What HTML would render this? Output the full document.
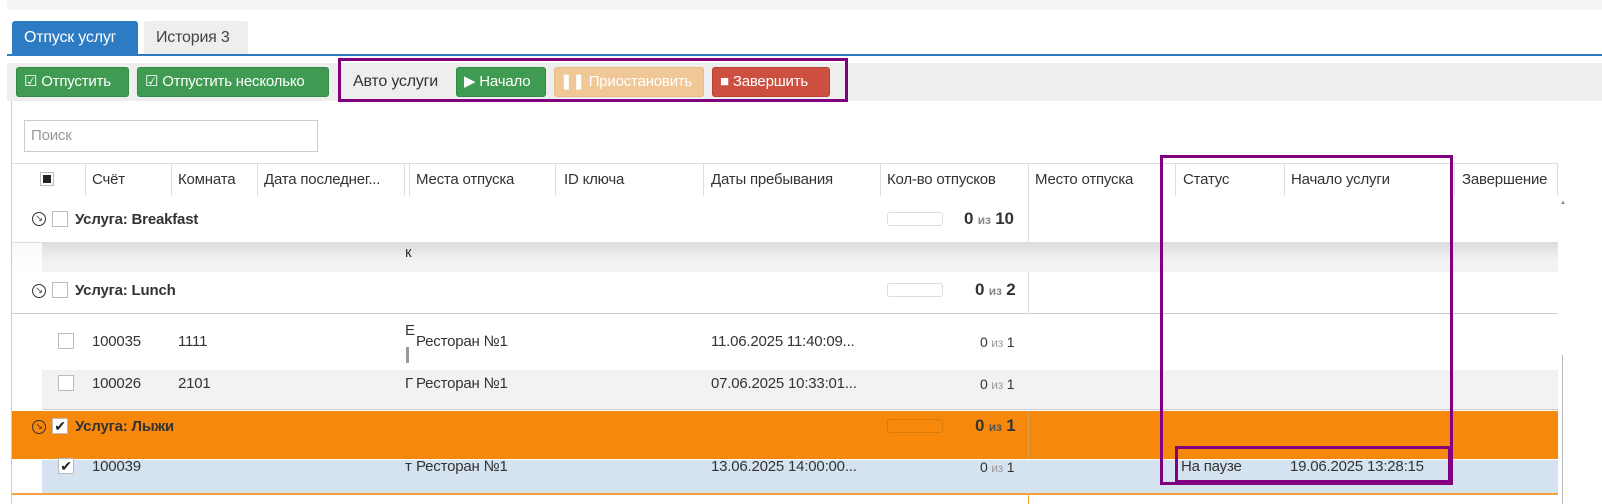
<!DOCTYPE html>
<html><head><meta charset="utf-8"><style>
*{box-sizing:border-box;margin:0;padding:0}
body{width:1602px;height:504px;background:#fff;font-family:"Liberation Sans Narrow","Liberation Sans",sans-serif;font-size:15px;letter-spacing:-0.2px;color:#333;position:relative;overflow:hidden}
.a{position:absolute}
.btn{position:absolute;top:67px;height:30px;border-radius:3px;color:#fff;line-height:28px;padding-left:7px;font-size:15px;white-space:nowrap;overflow:hidden}
.g{background:#3f9a52;border:1px solid #358a45}
.cb{position:absolute;width:16px;height:16px;border:1px solid #bbb;background:#fff}
.hd{position:absolute;top:171px;font-size:15px;color:#333}
.sep{position:absolute;top:163px;height:33px;width:1px;background:#ddd}
.t{position:absolute;font-size:15px;color:#333;white-space:nowrap}
.b{font-weight:bold}
.bar{position:absolute;width:56px;height:14px;border:1px solid #ddd;border-radius:3px;background:#fff}
.circ{position:absolute;width:14px;height:14px;border:1.5px solid #333;border-radius:50%;font-size:9px;line-height:11px;text-align:center}
</style></head><body>
<div class="a" style="left:7px;top:0;width:1595px;height:10px;background:#f5f5f5"></div>
<div class="a" style="left:12px;top:21px;width:126px;height:34px;background:#2c7bc3;border-radius:3px 3px 0 0;color:#fff;line-height:34px;padding-left:12px;font-size:16px">Отпуск услуг</div>
<div class="a" style="left:144px;top:21px;width:104px;height:34px;background:#eee;border-radius:3px 3px 0 0;line-height:34px;padding-left:12px;font-size:16px;color:#444">История 3</div>
<div class="a" style="left:7px;top:54px;width:1595px;height:2px;background:#2c7bc3"></div>
<div class="a" style="left:7px;top:63px;width:1595px;height:38px;background:#eee"></div>
<div class="btn g" style="left:16px;width:113px">☑ Отпустить</div>
<div class="btn g" style="left:137px;width:192px">☑ Отпустить несколько</div>
<div class="a" style="left:338px;top:58px;width:510px;height:44px;border:3px solid #800080"></div>
<div class="t" style="left:353px;top:73px;font-size:16px">Авто услуги</div>
<div class="btn g" style="left:456px;width:90px">▶ Начало</div>
<div class="btn" style="left:554px;width:150px;background:#f0c797;border:1px solid #e8bb85;padding-left:5px">❚❚ Приостановить</div>
<div class="btn" style="left:712px;width:118px;background:#cd4f3f;border:1px solid #bb4333">■ Завершить</div>
<div class="a" style="left:11px;top:101px;width:1px;height:403px;background:#ccc"></div>
<div class="a" style="left:24px;top:120px;width:294px;height:32px;border:1px solid #ccc;color:#999;padding:6px 6px">Поиск</div>
<div class="a" style="left:12px;top:163px;width:1546px;height:1px;background:#ddd"></div>
<div class="a" style="left:40px;top:172px;width:14px;height:14px;border:1px solid #bbb;background:#fff"><div style="margin:2px;width:8px;height:8px;background:#222"></div></div>
<div class="sep" style="left:85px"></div><div class="sep" style="left:171px"></div><div class="sep" style="left:257px"></div><div class="sep" style="left:404px"></div><div class="sep" style="left:409px"></div><div class="sep" style="left:555px"></div><div class="sep" style="left:703px"></div><div class="sep" style="left:880px"></div><div class="sep" style="left:1028px"></div><div class="sep" style="left:1175px"></div><div class="sep" style="left:1284px"></div><div class="sep" style="left:1454px"></div><div class="sep" style="left:1557px"></div>
<div class="hd" style="left:92px">Счёт</div><div class="hd" style="left:178px">Комната</div><div class="hd" style="left:264px">Дата последнег...</div><div class="hd" style="left:416px">Места отпуска</div><div class="hd" style="left:564px">ID ключа</div><div class="hd" style="left:711px">Даты пребывания</div><div class="hd" style="left:887px">Кол-во отпусков</div><div class="hd" style="left:1035px">Место отпуска</div><div class="hd" style="left:1183px">Статус</div><div class="hd" style="left:1291px">Начало услуги</div><div class="hd" style="left:1462px">Завершение</div>
<!-- Breakfast -->
<div class="a" style="left:12px;top:196px;width:1546px;height:47px;background:#fff;border-bottom:1px solid #ddd"></div>
<div class="circ" style="left:32px;top:212px">↘</div><div class="cb" style="left:52px;top:211px"></div>
<div class="t b" style="left:75px;top:211px">Услуга: Breakfast</div>
<div class="bar" style="left:887px;top:212px"></div><div class="t b" style="left:964px;top:209px;font-size:17px">0 <small style="font-size:12px;color:#888">из</small> 10</div>
<div class="a" style="left:1028px;top:196px;width:1px;height:47px;background:#ddd"></div>
<div class="a" style="left:12px;top:243px;width:1546px;height:29px;background:linear-gradient(#ddd,#f2f2f2 60%)"></div>
<div class="a" style="left:12px;top:243px;width:30px;height:29px;background:linear-gradient(#fafafa,#fff)"></div>
<div class="t" style="left:405px;top:244px">к</div>
<!-- Lunch -->
<div class="a" style="left:12px;top:272px;width:1546px;height:42px;background:#fff;border-bottom:1px solid #ccc"></div>
<div class="circ" style="left:32px;top:284px">↘</div><div class="cb" style="left:52px;top:282px"></div>
<div class="t b" style="left:75px;top:282px">Услуга: Lunch</div>
<div class="bar" style="left:887px;top:283px"></div><div class="t b" style="left:975px;top:280px;font-size:17px">0 <small style="font-size:12px;color:#888">из</small> 2</div>
<div class="a" style="left:1028px;top:272px;width:1px;height:42px;background:#ddd"></div>
<!-- 100035 -->
<div class="cb" style="left:58px;top:333px"></div>
<div class="t" style="left:92px;top:333px">100035</div><div class="t" style="left:178px;top:333px">1111</div>
<div class="t" style="left:405px;top:322px">E</div><div class="a" style="left:406px;top:347px;width:3px;height:16px;background:#999"></div>
<div class="t" style="left:416px;top:333px">Ресторан №1</div><div class="t" style="left:711px;top:333px">11.06.2025 11:40:09...</div>
<div class="t" style="left:980px;top:334px;font-size:14px">0 <span style="font-size:12px;color:#999">из</span> 1</div>
<!-- 100026 -->
<div class="a" style="left:42px;top:370px;width:1516px;height:40px;background:#f2f2f2;border-bottom:1px solid #ccc"></div>
<div class="cb" style="left:58px;top:375px"></div>
<div class="t" style="left:92px;top:375px">100026</div><div class="t" style="left:178px;top:375px">2101</div><div class="t" style="left:405px;top:375px">Г</div>
<div class="t" style="left:416px;top:375px">Ресторан №1</div><div class="t" style="left:711px;top:375px">07.06.2025 10:33:01...</div>
<div class="t" style="left:980px;top:376px;font-size:14px">0 <span style="font-size:12px;color:#999">из</span> 1</div>
<!-- Лыжи -->
<div class="a" style="left:12px;top:411px;width:1546px;height:48px;background:#f6890c"></div>
<div class="circ" style="left:32px;top:420px">↘</div><div class="cb" style="left:52px;top:418px;font-size:14px;line-height:14px;text-align:center;color:#222">✔</div>
<div class="t b" style="left:75px;top:418px">Услуга: Лыжи</div>
<div class="bar" style="left:887px;top:419px;background:#f6890c;border-color:#d97a0a"></div><div class="t b" style="left:975px;top:416px;font-size:17px">0 <small style="font-size:12px;color:#555">из</small> 1</div>
<div class="a" style="left:1028px;top:411px;width:1px;height:48px;background:#d9a050"></div>
<!-- 100039 -->
<div class="a" style="left:42px;top:460px;width:1516px;height:33px;background:#d4e3ef"></div>
<div class="cb" style="left:58px;top:458px;font-size:14px;line-height:14px;text-align:center;color:#222">✔</div>
<div class="t" style="left:92px;top:458px">100039</div><div class="t" style="left:405px;top:458px">т</div>
<div class="t" style="left:416px;top:458px">Ресторан №1</div><div class="t" style="left:711px;top:458px">13.06.2025 14:00:00...</div>
<div class="t" style="left:980px;top:459px;font-size:14px">0 <span style="font-size:12px;color:#999">из</span> 1</div>
<div class="t" style="left:1181px;top:458px">На паузе</div><div class="t" style="left:1290px;top:458px">19.06.2025 13:28:15</div>
<div class="a" style="left:12px;top:493px;width:1546px;height:2px;background:#f6a040"></div>
<div class="a" style="left:1028px;top:495px;width:1px;height:9px;background:#f6a040"></div>
<!-- purple boxes -->
<div class="a" style="left:1160px;top:155px;width:293px;height:330px;border:3px solid #800080"></div>
<div class="a" style="left:1175px;top:446px;width:276px;height:37px;border:3px solid #800080"></div>
<div class="a" style="left:1560px;top:200px;width:8px;height:4px;color:#888;font-size:6px">▲</div>
<div class="a" style="left:1562px;top:355px;width:1px;height:149px;background:#bbb"></div>
</body></html>
